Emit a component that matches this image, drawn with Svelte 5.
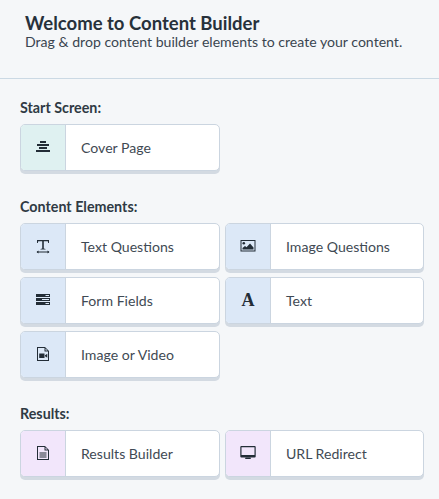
<script>
    const contentItems = [
        { label: 'Text Questions', icon: 'text' },
        { label: 'Image Questions', icon: 'image' },
        { label: 'Form Fields', icon: 'form' },
        { label: 'Text', icon: 'letter' },
        { label: 'Image or Video', icon: 'video' }
    ];
    const resultItems = [
        { label: 'Results Builder', icon: 'doc' },
        { label: 'URL Redirect', icon: 'monitor' }
    ];
</script>

{#snippet icon(name)}
    {#if name === 'letter'}
        <span class="letter-icon">A</span>
    {:else}
    <svg width="16" height="16" viewBox="0 0 16 16" fill="#232d37">
        {#if name === 'cover'}
            <path d="M5 2h6v2H5zM2 5h12v2H2zM4 8h8v2H4zM1 11h14v2H1z" />
        {:else if name === 'text'}
            <path d="M2 2h12v3h-.8l-.4-1.800H8.800V10.500l1.700.4v.6h-5v-.6l1.700-.4V3.200H3.200L2.800 5H2z" />
            <path d="M2 13.600h12v.8H2z" />
            <path d="M1.500 14l2-1.400v2.800zM14.500 14l-2-1.400v2.800z" />
        {:else if name === 'image'}
            <path fill-rule="evenodd" d="M.5 2h15v11.500H.5zM1.500 3v9.500h13V3z" />
            <circle cx="3.800" cy="5.200" r="1.300" />
            <path d="M2.500 11.500V10l2.500-2 1.500 1.200L10 5.500l3.500 4v2z" />
        {:else if name === 'form'}
            <path fill-rule="evenodd" d="M1 2h14v3H1zM10.500 3v1H14V3zM1 6h14v3H1zM7 7v1h7V7zM1 10h14v3H1zM10.500 11v1H14v-1z" />
        {:else if name === 'video'}
            <path fill-rule="evenodd" d="M2 1h8l4 4v10H2zM3 2v12h10V5.500H9.500V2zM10.500 2.500v2h2z" />
            <path d="M4.200 7.500h5.300v4.500H4.200zM10 9.300l2.300-1.600v4.100L10 10.200z" />
        {:else if name === 'doc'}
            <path fill-rule="evenodd" d="M2 1h8l4 4v10H2zM3 2v12h10V5.500H9.500V2zM10.500 2.500v2h2z" />
            <path d="M4.500 7.500h7v1h-7zM4.500 9.500h7v1h-7zM4.500 11.500h7v1h-7z" />
        {:else if name === 'monitor'}
            <path fill-rule="evenodd" d="M1.300 1h13.400a1 1 0 0 1 1 1v9.500a1 1 0 0 1-1 1H1.300a1 1 0 0 1-1-1V2a1 1 0 0 1 1-1zM1.500 2.300v7.700h13V2.300z" />
            <path d="M5.500 12.500h5l.4 1.500H5.100z" />
        {/if}
    </svg>
    {/if}
{/snippet}

{#snippet card(item, tone)}
    <div class="card">
        <div class="card-icon {tone}">{@render icon(item.icon)}</div>
        <div class="card-label">{item.label}</div>
    </div>
{/snippet}

<div class="builder">
    <header class="intro">
        <h2>Welcome to Content Builder</h2>
        <p>Drag &amp; drop content builder elements to create your content.</p>
    </header>

    <section class="group start">
        <h3>Start Screen:</h3>
        <div class="cards">
            {@render card({ label: 'Cover Page', icon: 'cover' }, 'teal')}
        </div>
    </section>

    <section class="group">
        <h3>Content Elements:</h3>
        <div class="cards">
            {#each contentItems as item}
                {@render card(item, 'blue')}
            {/each}
        </div>
    </section>

    <section class="group">
        <h3>Results:</h3>
        <div class="cards">
            {#each resultItems as item}
                {@render card(item, 'purple')}
            {/each}
        </div>
    </section>
</div>

<style>
    :global(body) {
        background: #f5f7f9;
    }

    .builder {
        width: 439px;
        height: 499px;
        overflow: hidden;
        background: #f5f7f9;
        font-family: "Lato", "Open Sans", sans-serif;
        color: #2a3540;
    }

    .intro {
        height: 79px;
        box-sizing: border-box;
        padding: 13px 25px 0;
        border-bottom: 1px solid #cbd9e4;
    }

    h2 {
        margin: 0;
        font-size: 18.500px;
        line-height: 20px;
        font-weight: 700;
        color: #27313b;
    }

    p {
        margin: 0;
        font-size: 14.100px;
        line-height: 18px;
        color: #3a4550;
    }

    .group {
        padding: 27px 15px 0 20px;
    }

    .start {
        padding-top: 20px;
    }

    h3 {
        margin: 0 0 7px;
        font-size: 14.300px;
        line-height: 18px;
        font-weight: 700;
        color: #2f3a44;
    }

    .cards {
        display: grid;
        grid-template-columns: 200px 199px;
        gap: 7px 5px;
    }

    .card {
        display: flex;
        box-sizing: border-box;
        height: 47px;
        background: #fff;
        border: 1px solid #cbd5e0;
        border-radius: 5px;
        box-shadow: 0 3px 0 #d3dae2;
        overflow: hidden;
    }

    .card-icon {
        width: 44px;
        flex: none;
        padding-bottom: 1px;
        display: flex;
        align-items: center;
        justify-content: center;
        border-right: 1px solid #cbd5e0;
    }

    .letter-icon {
        font-family: "Liberation Serif", serif;
        font-weight: 700;
        font-size: 18px;
        line-height: 16px;
        color: #232d37;
    }

    .teal {
        background: #dff1f1;
    }

    .blue {
        background: #dce8f7;
    }

    .purple {
        background: #f2e6fb;
    }

    .card-label {
        padding-left: 15px;
        display: flex;
        align-items: center;
        font-size: 14.100px;
        color: #3f4a54;
    }
</style>
